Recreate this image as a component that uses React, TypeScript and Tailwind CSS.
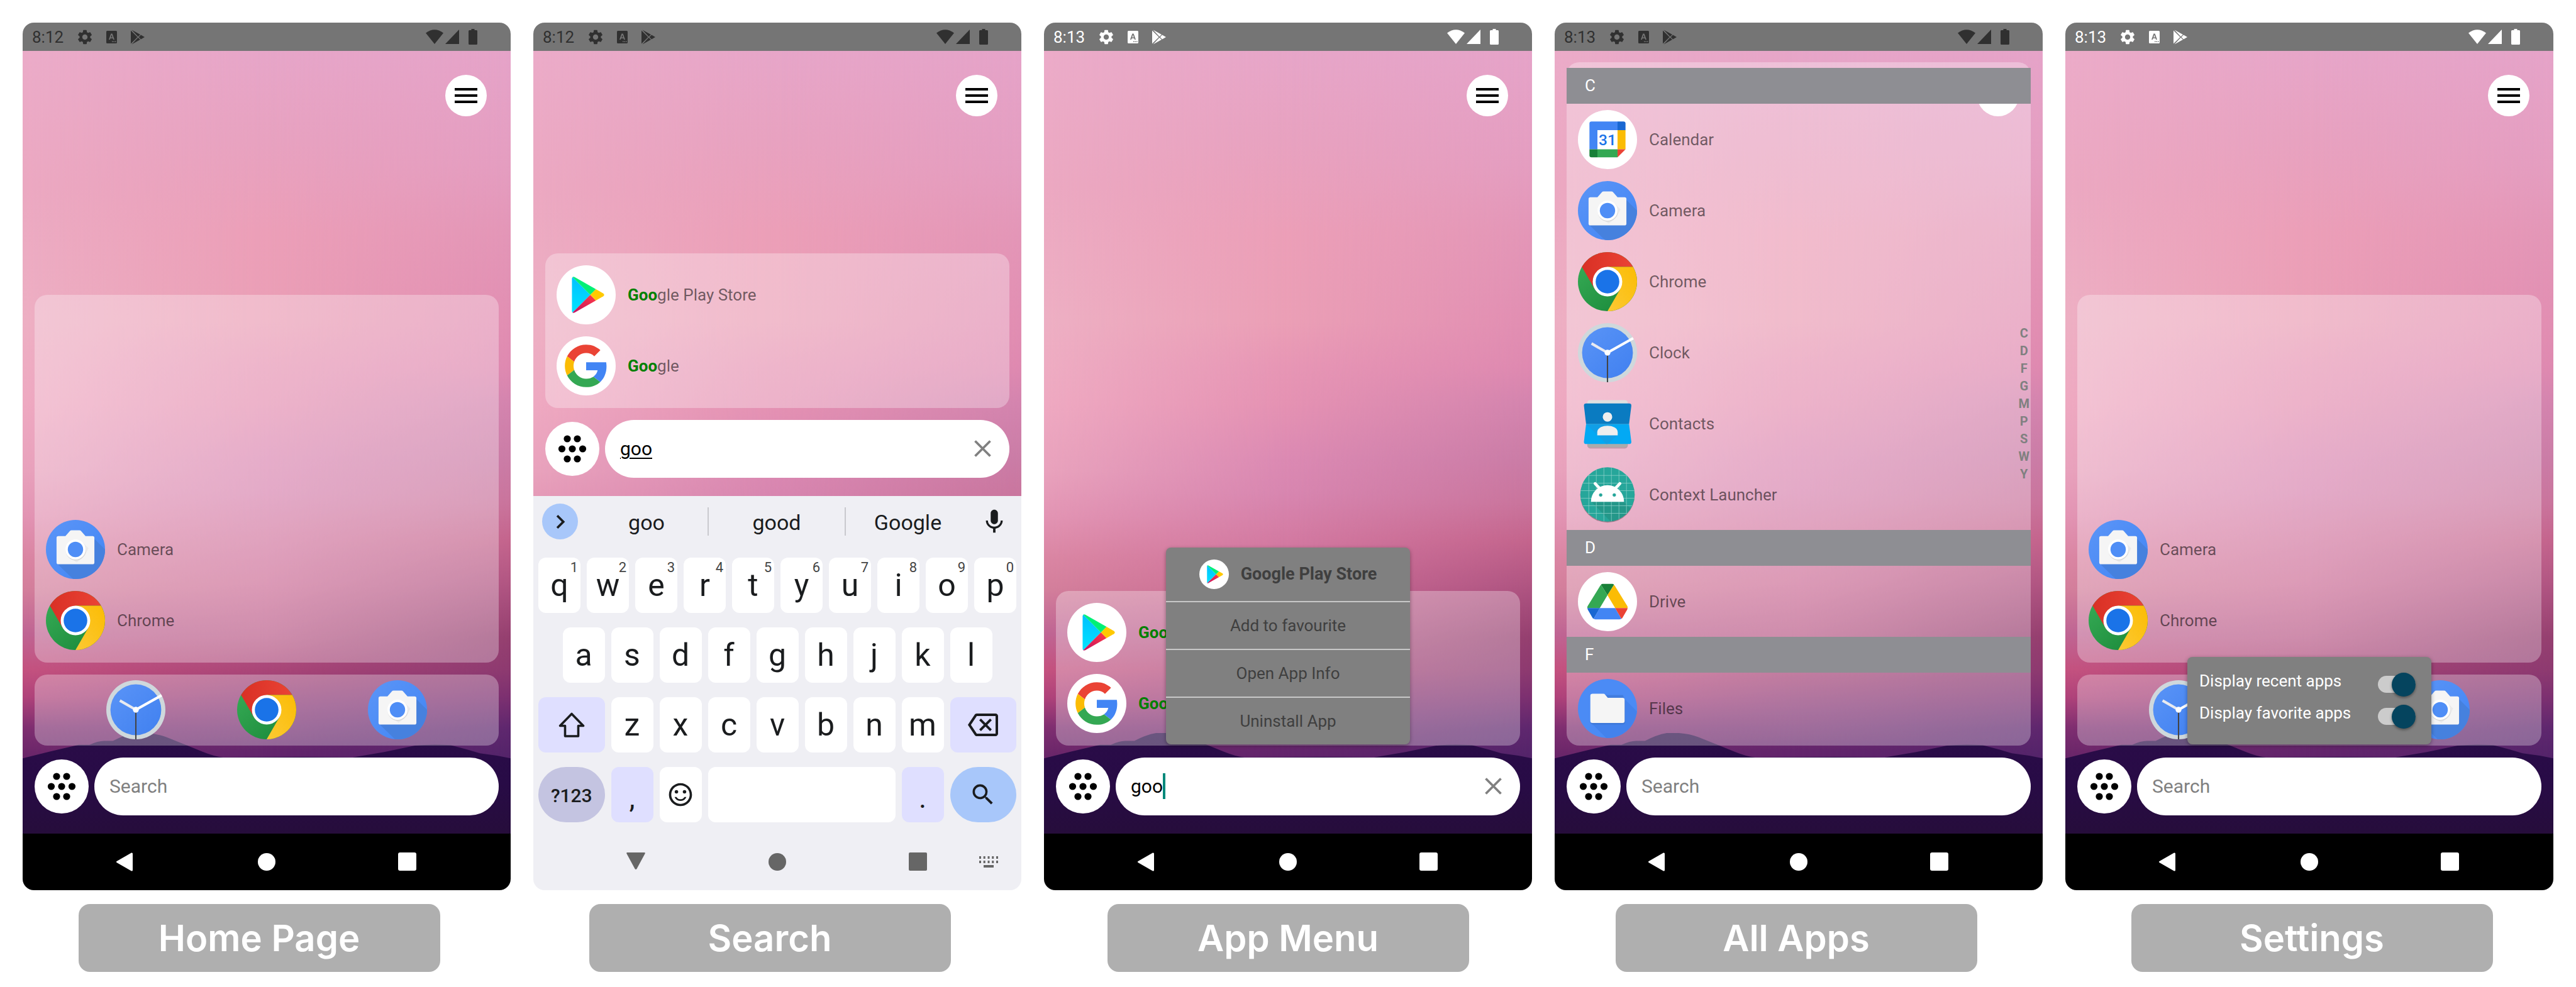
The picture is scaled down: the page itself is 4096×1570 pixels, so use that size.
import React, { useId } from "react";
import { MdSettings, MdChevronRight, MdMic, MdOutlineBackspace, MdOutlineSentimentSatisfiedAlt, MdSearch } from "react-icons/md";

/* ---------- wallpaper ---------- */

type Stop = [number, string];

const LEFT_SKY: Stop[] = [
  [0, "#ebabc8"], [300, "#eba8c1"], [600, "#edafc3"], [780, "#eea9c1"], [930, "#e8a2bc"], [1030, "#e294b3"],
  [1120, "#da86a3"], [1190, "#d37f9b"], [1290, "#bf6593"], [1370, "#c4527f"], [1430, "#b0437a"], [1500, "#7e2e70"], [1560, "#6a2669"],
];
const MID_SKY: Stop[] = [
  [0, "#e7a6c9"], [200, "#e8a2c0"], [400, "#ec9fb8"], [600, "#eb9fb6"], [700, "#e796b5"], [780, "#e592b3"], [900, "#dc8ab3"],
  [980, "#d886b0"], [1050, "#d57ea6"], [1180, "#cd6f98"], [1300, "#b95b88"], [1370, "#aa4678"], [1450, "#8a3876"], [1550, "#63256c"],
];
const RIGHT_SKY: Stop[] = [
  [0, "#e5a3c8"], [250, "#e49dc0"], [400, "#e396b7"], [600, "#e18eb2"], [700, "#de89b0"], [780, "#d384ae"], [900, "#ca7ca6"],
  [1000, "#c9749c"], [1080, "#c4658d"], [1180, "#b05582"], [1300, "#943f6f"], [1370, "#8d3a70"], [1430, "#7c3070"], [1500, "#5e276e"], [1560, "#54246a"],
];

function SkyGradient({ id, stops }: { id: string; stops: Stop[] }) {
  return (
    <linearGradient id={id} gradientUnits="userSpaceOnUse" x1="0" y1="0" x2="0" y2="1731">
      {stops.map(([y, color]) => (
        <stop key={y} offset={y / 1731} stopColor={color} />
      ))}
    </linearGradient>
  );
}

function Wallpaper() {
  const id = useId();
  return (
    <svg className="absolute inset-x-0 top-0 w-full" viewBox="0 0 1080 1733" preserveAspectRatio="none" aria-hidden="true">
      <defs>
        <SkyGradient id={id + "l"} stops={LEFT_SKY} />
        <SkyGradient id={id + "m"} stops={MID_SKY} />
        <SkyGradient id={id + "r"} stops={RIGHT_SKY} />
        <linearGradient id={id + "fl"} x1="0" x2="1" y1="0" y2="0">
          <stop offset="0" stopColor="#fff" />
          <stop offset="0.5" stopColor="#000" />
        </linearGradient>
        <linearGradient id={id + "fr"} x1="0" x2="1" y1="0" y2="0">
          <stop offset="0.5" stopColor="#000" />
          <stop offset="1" stopColor="#fff" />
        </linearGradient>
        <linearGradient id={id + "hill"} x1="0" x2="0" y1="0" y2="1">
          <stop offset="0" stopColor="#2a0c48" />
          <stop offset="0.5" stopColor="#280b46" />
          <stop offset="1" stopColor="#260d3b" />
        </linearGradient>
        <mask id={id + "ml"} style={{ maskType: "luminance" }}>
          <rect width="1080" height="1733" fill={`url(#${id}fl)`} />
        </mask>
        <mask id={id + "mr"} style={{ maskType: "luminance" }}>
          <rect width="1080" height="1733" fill={`url(#${id}fr)`} />
        </mask>
      </defs>
      <rect width="1080" height="1733" fill={`url(#${id}m)`} />
      <rect width="1080" height="1733" fill={`url(#${id}l)`} mask={`url(#${id}ml)`} />
      <rect width="1080" height="1733" fill={`url(#${id}r)`} mask={`url(#${id}mr)`} />
      <path
        fill={`url(#${id}hill)`}
        d="M0 1566 60 1551 124 1536H148Q168 1527 182 1527.5H200Q225 1514 248 1510H275Q300 1512 318 1519L358 1535 400 1552Q425 1562 444 1564L620 1563 730 1564 800 1552 868 1538Q905 1534 947 1537L985 1547 1012 1555 1050 1560 1080 1566V1733H0Z"
      />
    </svg>
  );
}

/* ---------- app icons, each on a 100 unit canvas ---------- */

type AppName = "Calendar" | "Camera" | "Chrome" | "Clock" | "Contacts" | "Context Launcher" | "Drive" | "Files" | "Google Play Store" | "Google";

function CameraArt() {
  const id = useId();
  return (
    <>
      <defs>
        <clipPath id={id + "c"}>
          <circle cx="50" cy="50" r="50" />
        </clipPath>
        <linearGradient id={id + "s"} x1="0" y1="0" x2="1" y2="1">
          <stop offset="0" stopColor="#5b95f7" />
          <stop offset="1" stopColor="#4285f4" />
        </linearGradient>
      </defs>
      <circle cx="50" cy="50" r="50" fill={`url(#${id}s)`} />
      <path clipPath={`url(#${id}c)`} fill="#4681de" d="M81 31 104 54V104H50L19 74Z" />
      <path fill="#f5f5f5" d="M21 27.500H33L40.500 19Q41.500 17.500 43.500 17.500H56.500Q58.500 17.500 59.500 19L67 27.500H79Q82 27.500 82 30.500V72Q82 75 79 75H21Q18 75 18 72V30.500Q18 27.500 21 27.500Z" />
      <path fill="#e4e4e4" d="M62 38 72 48 66 60 52 72 40 63Z" opacity=".6" />
      <circle cx="50.500" cy="51.500" r="17" fill="#d9d9d9" />
      <circle cx="50" cy="50" r="17" fill="#fff" />
      <circle cx="50" cy="50" r="13" fill="#4f8ef6" />
    </>
  );
}

function ChromeArt() {
  const id = useId();
  return (
    <>
      <defs>
        <linearGradient id={id + "r"} x1="0" x2="1">
          <stop offset="0" stopColor="#d93025" />
          <stop offset="1" stopColor="#ea4335" />
        </linearGradient>
        <linearGradient id={id + "y"} x1="0" x2="1" y1="1" y2="0">
          <stop offset="0" stopColor="#fcc934" />
          <stop offset="1" stopColor="#fbbc04" />
        </linearGradient>
        <linearGradient id={id + "g"} x1="0.600" y1="1" x2="0" y2="0.300">
          <stop offset="0" stopColor="#1e8e3e" />
          <stop offset="1" stopColor="#34a853" />
        </linearGradient>
      </defs>
      <circle cx="50" cy="50" r="50" fill={`url(#${id}g)`} />
      <path fill={`url(#${id}r)`} d="M6.700 25A50 50 0 0 1 93.300 25H50L28.350 62.500Z" />
      <path fill={`url(#${id}y)`} d="M93.300 25A50 50 0 0 1 50 100L71.650 62.500 50 25Z" />
      <circle cx="50" cy="50" r="25" fill="#fff" />
      <circle cx="50" cy="50" r="20" fill="#1a73e8" />
    </>
  );
}

function ClockArt() {
  const id = useId();
  return (
    <>
      <defs>
        <linearGradient id={id} x1="0" y1="0" x2="1" y2="1">
          <stop offset="0" stopColor="#5a94f7" />
          <stop offset="1" stopColor="#4080f0" />
        </linearGradient>
      </defs>
      <circle cx="50" cy="50" r="50" fill="#cfd8dc" />
      <circle cx="50" cy="50" r="43" fill={`url(#${id})`} />
      <path stroke="#444" strokeWidth="2.200" d="M50 50V100" />
      <path stroke="#e8eaf0" strokeWidth="4.500" d="M50 50 23 34.500" />
      <path stroke="#fff" strokeWidth="4.500" d="M50 50 93.500 25.500" />
      <circle cx="50" cy="50" r="5" fill="#fff" />
    </>
  );
}

function ContactsArt() {
  return (
    <>
      <rect x="15.800" y="12" width="68.600" height="80" rx="5" fill="#000" opacity=".18" />
      <rect x="15.800" y="10" width="68.600" height="40" rx="5" fill="#e0e0e0" />
      <rect x="15.800" y="50" width="68.600" height="40" rx="5" fill="#ababab" />
      <path fill="#0a7bc1" d="M14 15.800H86.500Q90.700 15.800 90.300 20L86.500 50.500H13.800L10.200 20Q9.800 15.800 14 15.800Z" />
      <path fill="#03a9f4" d="M13.800 50.500H86.500L90.300 80Q90.700 84.400 86.500 84.400H14Q9.800 84.400 10.200 80Z" />
      <path fill="#119fe6" d="M14.500 51 33 69.500H67L50 84.400H48Z M14.500 51H60L33 69Z" />
      <circle cx="50" cy="38.500" r="8" fill="#eee" />
      <path fill="#eee" d="M32.700 69.600V64C33.500 50 66.500 50 67.300 64V69.600Z" />
    </>
  );
}

function LauncherArt() {
  const id = useId();
  return (
    <>
      <defs>
        <clipPath id={id}>
          <circle cx="50" cy="49.500" r="46" />
        </clipPath>
      </defs>
      <circle cx="50" cy="51" r="46" fill="#000" opacity=".3" />
      <circle cx="50" cy="49.500" r="46" fill="#26a69a" />
      <g clipPath={`url(#${id})`}>
        <path fill="#249384" d="M23 62H78L100 84V100H60Z" opacity=".8" />
        <path
          stroke="#8fd2cb"
          strokeWidth=".8"
          d="M18.400 0V100M31.100 0V100M43.900 0V100M56.600 0V100M69.400 0V100M82.100 0V100M0 17.300H100M0 30.400H100M0 43.100H100M0 55.900H100M0 68.600H100M0 81.400H100"
        />
      </g>
      <path fill="#fff" d="M22 62A28 28.300 0 0 1 78 62Z" />
      <path stroke="#fff" strokeWidth="4.800" strokeLinecap="round" d="M29 31 37.500 40M71 31 62.500 40" />
      <circle cx="38.500" cy="50.300" r="2.800" fill="#26a69a" />
      <circle cx="61.500" cy="50.300" r="2.800" fill="#26a69a" />
    </>
  );
}

function CalendarArt() {
  return (
    <>
      <circle cx="50" cy="50" r="50" fill="#fff" />
      <path fill="#4285f4" d="M23 19.500H67V34H33V66.500H19.500V23Q19.500 19.500 23 19.500Z" />
      <path fill="#1967d2" d="M67 19.500H77Q80.500 19.500 80.500 23V34H67Z" />
      <path fill="#fbbc04" d="M67 34H80.500V66.500H67Z" />
      <path fill="#34a853" d="M33 66.500H67V80H33Z" />
      <path fill="#188038" d="M19.500 66.500H33V80H23Q19.500 80 19.500 76.500Z" />
      <path fill="#ea4335" d="M67 66.500H80.500L67 80Z" />
      <text x="50" y="60" textAnchor="middle" fontFamily="Roboto" fontWeight="500" fontSize="26" fill="#1a73e8">
        31
      </text>
    </>
  );
}

function DriveArt() {
  return (
    <>
      <circle cx="50" cy="50" r="50" fill="#fff" />
      <path fill="#188038" d="M42 20H58Q60 20 61 21.500L50 39 39 21.500Q40 20 42 20Z" />
      <path fill="#34a853" d="M39 21.500 50 39 37 61H16Q15.500 59 16.500 57.500L37.500 23.500Z" />
      <path fill="#fbbc04" d="M61 21.500 62.500 23.500 83.500 57.500Q84.500 59 84 61H63L50 39Z" />
      <path fill="#4285f4" d="M37 61H63L73.500 79Q72 80 70 80H30Q28 80 26.500 79Z" />
      <path fill="#1967d2" d="M16 61H37L26.500 79Q25 78 24.500 77L17 64Q16 62.500 16 61Z" />
      <path fill="#ea4335" d="M63 61H84Q84 62.500 83 64L75.500 77Q75 78 73.500 79Z" />
    </>
  );
}

function FilesArt() {
  const id = useId();
  return (
    <>
      <defs>
        <clipPath id={id}>
          <circle cx="50" cy="50" r="50" />
        </clipPath>
      </defs>
      <circle cx="50" cy="50" r="50" fill="#4b8bf5" />
      <path clipPath={`url(#${id})`} fill="#4382ec" d="M78 33 104 59V104H52L22 74Z" />
      <path fill="#3a70c8" opacity=".5" d="M24 27H76Q79 34 80 37V73Q80 77 76 77H25Q21 77 21 73Z" />
      <path fill="#f5f5f5" d="M25 25H43Q45 25 46 26.500L50.500 32H75.500Q79 32 79 35.500V71Q79 74.500 75.500 74.500H24.500Q21 74.500 21 71V28.500Q21 25 25 25Z" />
    </>
  );
}

function PlayArt() {
  const id = useId();
  return (
    <>
      <defs>
        <linearGradient id={id + "b"} x1="0" y1="0" x2="0" y2="1">
          <stop offset="0" stopColor="#00c0ff" />
          <stop offset="1" stopColor="#00e3ff" />
        </linearGradient>
        <linearGradient id={id + "r"} x1="1" y1="0" x2="0" y2="1">
          <stop offset="0" stopColor="#ff3a44" />
          <stop offset="1" stopColor="#c31162" />
        </linearGradient>
      </defs>
      <circle cx="50" cy="50" r="50" fill="#fff" />
      <path fill={`url(#${id}b)`} d="M27 20 57 50 27 80Q26 79 26 77V23Q26 21 27 20Z" />
      <path fill="#00f076" d="M27 20Q28 19 30.500 20L66.500 40.500 57 50Z" />
      <path fill={`url(#${id}r)`} d="M27 80Q28 81 30.500 80L66.500 59.500 57 50Z" />
      <path fill="#ffc900" d="M66.500 40.500 79 47.500Q82 50 79 52.500L66.500 59.500 57 50Z" />
    </>
  );
}

function GoogleArt() {
  return (
    <>
      <circle cx="50" cy="50" r="50" fill="#fff" />
      <g transform="translate(14 14) scale(1.5)">
        <path fill="#ea4335" d="M24 9.500c3.540 0 6.710 1.220 9.210 3.600l6.850-6.850C35.900 2.380 30.470 0 24 0 14.620 0 6.510 5.380 2.560 13.220l7.980 6.190C12.430 13.720 17.740 9.500 24 9.500z" />
        <path fill="#4285f4" d="M46.980 24.550c0-1.570-.15-3.090-.38-4.550H24v9.020h12.940c-.58 2.960-2.260 5.480-4.780 7.180l7.730 6c4.510-4.180 7.090-10.360 7.090-17.650z" />
        <path fill="#fbbc05" d="M10.530 28.590c-.48-1.450-.76-2.990-.76-4.590s.27-3.140.76-4.590l-7.980-6.190C.92 16.460 0 20.120 0 24c0 3.880.92 7.540 2.560 10.780l7.970-6.190z" />
        <path fill="#34a853" d="M24 48c6.480 0 11.930-2.130 15.890-5.810l-7.730-6c-2.150 1.450-4.920 2.300-8.160 2.300-6.260 0-11.570-4.220-13.470-9.910l-7.980 6.190C6.510 42.620 14.620 48 24 48z" />
      </g>
    </>
  );
}

const ART: Record<AppName, () => React.JSX.Element> = {
  Calendar: CalendarArt,
  Camera: CameraArt,
  Chrome: ChromeArt,
  Clock: ClockArt,
  Contacts: ContactsArt,
  "Context Launcher": LauncherArt,
  Drive: DriveArt,
  Files: FilesArt,
  "Google Play Store": PlayArt,
  Google: GoogleArt,
};

function AppIcon({ name, className = "size-[94px]" }: { name: AppName; className?: string }) {
  const Art = ART[name];
  return (
    <svg className={`${className} shrink-0`} viewBox="0 0 100 100" fill="none" aria-hidden="true">
      <Art />
    </svg>
  );
}

/* ---------- phone parts ---------- */

function StatusBar({ time, light = false }: { time: string; light?: boolean }) {
  return (
    <div className={`flex h-[45px] shrink-0 items-center bg-[#757575] pr-[53px] pl-[15px] ${light ? "text-white" : "text-[#303030]"}`}>
      <span className="text-[26px] leading-8">{time}</span>
      <MdSettings className="ml-5 size-7" />
      <svg className="ml-5 h-5 w-[17px]" viewBox="0 0 17 20" aria-hidden="true">
        <path
          fill="currentColor"
          fillRule="evenodd"
          d="M1.500 0H15.500Q17 0 17 1.500V18.500Q17 20 15.500 20H1.500Q0 20 0 18.500V1.500Q0 0 1.500 0ZM7.400 4.500 4 14H5.900L6.600 12H10.400L11.100 14H13L9.600 4.500ZM8.500 6.600 9.800 10.400H7.200ZM9 16.500V18H10.500V16.500ZM11.500 16.500V18H13V16.500ZM14 16.500V18H15.500V16.500Z"
        />
      </svg>
      <svg className="ml-[22px] h-6 w-[22px]" viewBox="0 0 22 24" fill="currentColor" aria-hidden="true">
        <path d="M0 1.500 10.600 12 0 22.500ZM1.500 0.500 15 8 11.600 11.200ZM1.500 23.500 15 16 11.600 12.800ZM16 8.500 22 12 16 15.500 12.600 12Z" />
      </svg>
      <svg className="ml-auto h-[23px] w-7" viewBox="0 0 28 23" fill="currentColor" aria-hidden="true">
        <path d="M0 5.500Q14-5 28 5.500L14 23Z" />
      </svg>
      <svg className="ml-[3px] h-[23px] w-[22px]" viewBox="0 0 22 23" fill="currentColor" aria-hidden="true">
        <path d="M22 0V23H0Z" />
      </svg>
      <svg className="ml-[15px] h-[25px] w-[14px]" viewBox="0 0 14 25" fill="currentColor" aria-hidden="true">
        <path d="M4.500 0H9.500V2H12.500Q14 2 14 3.500V23.500Q14 25 12.500 25H1.500Q0 25 0 23.500V3.500Q0 2 1.500 2H4.500Z" />
      </svg>
    </div>
  );
}

function NavBar() {
  return (
    <nav className="flex h-[90px] shrink-0 items-center justify-between bg-black pr-[150px] pl-[148px]">
      <button type="button" aria-label="Back">
        <svg className="size-[30px]" viewBox="0 0 30 30" aria-hidden="true">
          <path fill="#fff" d="M1.500 14 25 0.500Q27 0 27 2V28Q27 30 25 29.500L1.500 16Q0 15 1.500 14Z" />
        </svg>
      </button>
      <button type="button" aria-label="Home" className="size-[28px] rounded-full bg-white" />
      <button type="button" aria-label="Overview" className="size-[29px] rounded-[3px] bg-white" />
    </nav>
  );
}

function MenuButton() {
  return (
    <button type="button" aria-label="Menu" className="absolute top-[38px] right-[38px] flex size-[66px] items-center justify-center rounded-full bg-white">
      <svg className="h-6 w-9" viewBox="0 0 36 24" aria-hidden="true">
        <path fill="#000" d="M0 0H36V4H0ZM0 10H36V14H0ZM0 20H36V24H0Z" />
      </svg>
    </button>
  );
}

function CloseIcon() {
  return (
    <svg className="size-[27px]" viewBox="0 0 27 27" aria-hidden="true">
      <path stroke="#808080" strokeWidth="3.800" d="M1.500 1.500 25.500 25.500M25.500 1.500 1.500 25.500" />
    </svg>
  );
}

function SearchRow({ query, mode = "empty" }: { query?: string; mode?: "empty" | "composing" | "caret" }) {
  return (
    <div className="flex items-center gap-[9px]">
      <button type="button" aria-label="All apps" className="flex size-[86px] shrink-0 items-center justify-center rounded-full bg-white">
        <svg className="size-[60px]" viewBox="0 0 60 60" aria-hidden="true">
          {[[22, 14], [38, 14], [13.5, 30], [30, 30], [46.5, 30], [22, 46], [38, 46]].map(([x, y]) => (
            <circle key={`${x}-${y}`} cx={x} cy={y} r="5.600" />
          ))}
        </svg>
      </button>
      <div className="flex h-[92px] min-w-0 flex-1 items-center rounded-full bg-white pr-[29px] pl-6">
        {mode === "empty" ? (
          <input aria-label="Search apps" placeholder="Search" className="w-full min-w-0 text-[30px] leading-10 outline-none placeholder:text-[#808080]" />
        ) : (
          <>
            <input
              aria-label="Search apps"
              defaultValue={query}
              className={`field-sizing-content text-[30px] leading-10 text-black outline-none ${mode === "composing" ? "underline decoration-2 underline-offset-4" : ""}`}
            />
            {mode === "caret" && <span className="h-[41px] w-1 bg-[#00897b]" />}
            <button type="button" aria-label="Clear search" className="ml-auto">
              <CloseIcon />
            </button>
          </>
        )}
      </div>
    </div>
  );
}

function AppRow({ name, match }: { name: AppName; match?: string }) {
  const size = match ? match.length : 0;
  return (
    <button type="button" className="flex h-[113px] w-full shrink-0 items-center gap-[19px] px-[18px] text-left">
      <AppIcon name={name} />
      <span className="text-[26px] leading-8 text-black/55">
        {size > 0 && <b className="font-bold text-[#008000]">{name.slice(0, size)}</b>}
        {name.slice(size)}
      </span>
    </button>
  );
}

function HomeArea({ children, overlay }: { children: React.ReactNode; overlay?: React.ReactNode }) {
  return (
    <div className="relative flex min-h-0 flex-1 flex-col overflow-hidden">
      <Wallpaper />
      <MenuButton />
      <div className="relative flex min-h-0 flex-1 flex-col justify-end gap-[19px] px-[19px] pb-[29px]">{children}</div>
      {overlay}
    </div>
  );
}

const PANEL = "rounded-[20px] bg-white/30";

function RecentApps() {
  return (
    <section aria-label="Recent apps" className={`flex h-[585px] flex-col justify-end pb-[10px] ${PANEL}`}>
      <AppRow name="Camera" />
      <AppRow name="Chrome" />
    </section>
  );
}

function FavoriteApps() {
  const apps: AppName[] = ["Clock", "Chrome", "Camera"];
  return (
    <section aria-label="Favorite apps" className={`flex h-[113px] items-center justify-evenly ${PANEL}`}>
      {apps.map((name) => (
        <button key={name} type="button" aria-label={name}>
          <AppIcon name={name} />
        </button>
      ))}
    </section>
  );
}

function SearchResults() {
  return (
    <section aria-label="Search results" className={`flex flex-col py-[10px] ${PANEL}`}>
      <AppRow name="Google Play Store" match="Goo" />
      <AppRow name="Google" match="Goo" />
    </section>
  );
}

/* ---------- keyboard ---------- */

const KEY = "col-span-2 h-[88px] rounded-xl bg-white text-center text-[50px] leading-[88px]";

function LetterKey({ letter, hint, className = "" }: { letter: string; hint?: string; className?: string }) {
  return (
    <button type="button" className={`relative ${KEY} ${className}`}>
      {letter}
      {hint && <span className="absolute top-1 right-1 text-[22px] leading-6 text-[#444]">{hint}</span>}
    </button>
  );
}

function Keyboard() {
  return (
    <div className="flex shrink-0 flex-col bg-[#efeff4] text-[#1a1c1e]">
      <div className="flex h-[82px] items-center pr-5 pl-[14px] text-[34px]">
        <button type="button" aria-label="More tools" className="flex size-[57px] items-center justify-center rounded-full bg-[#a8c7fa]">
          <MdChevronRight className="size-11" />
        </button>
        <div className="ml-1 flex flex-1 items-center">
          <button type="button" className="w-[202px] pt-1 pl-2 text-center">goo</button>
          <span className="h-[45px] w-[2px] bg-[#c9c9ce]" />
          <button type="button" className="flex-1 pt-1 text-center">good</button>
          <span className="h-[45px] w-[2px] bg-[#c9c9ce]" />
          <button type="button" className="w-[197px] pt-1 text-center">Google</button>
        </div>
        <button type="button" aria-label="Voice input" className="ml-4">
          <MdMic className="size-[46px]" />
        </button>
      </div>
      <div className="mt-4 grid grid-cols-20 gap-x-[10px] gap-y-[23px] px-2 pb-[18px]">
        {"qwertyuiop".split("").map((letter, i) => (
          <LetterKey key={letter} letter={letter} hint={String((i + 1) % 10)} />
        ))}
        {"asdfghjkl".split("").map((letter, i) => (
          <LetterKey key={letter} letter={letter} className={i === 0 ? "col-start-2" : ""} />
        ))}
        <button type="button" aria-label="Shift" className="col-span-3 col-start-1 flex h-[88px] items-center justify-center rounded-xl bg-[#dfdfff]">
          <svg className="h-10 w-[42px]" viewBox="0 0 42 40" fill="none" stroke="currentColor" strokeWidth="3.600" strokeLinejoin="round" aria-hidden="true">
            <path d="M21 2.500 39.500 21.500H31.500V38H10.500V21.500H2.500Z" />
          </svg>
        </button>
        {"zxcvbnm".split("").map((letter) => (
          <LetterKey key={letter} letter={letter} />
        ))}
        <button type="button" aria-label="Backspace" className="col-span-3 flex h-[88px] items-center justify-center rounded-xl bg-[#dfdfff]">
          <MdOutlineBackspace className="size-12" />
        </button>
        <button type="button" className="col-span-3 h-[88px] rounded-full bg-[#c4c4e1] pt-1 text-[30px] font-medium">
          ?123
        </button>
        <button type="button" className="col-span-2 h-[88px] rounded-xl bg-[#dfdfff] pt-3 text-[46px]">,</button>
        <button type="button" aria-label="Emoji" className="col-span-2 flex h-[88px] items-center justify-center rounded-xl bg-white">
          <MdOutlineSentimentSatisfiedAlt className="size-11" />
        </button>
        <button type="button" aria-label="Space" className="col-span-8 h-[88px] rounded-xl bg-white" />
        <button type="button" className="col-span-2 h-[88px] rounded-xl bg-[#dfdfff] pt-3 text-[46px]">.</button>
        <button type="button" aria-label="Search" className="col-span-3 flex h-[88px] items-center justify-center rounded-full bg-[#a8c7fa]">
          <MdSearch className="size-11" />
        </button>
      </div>
      <nav className="relative flex h-[90px] items-center justify-between pr-[150px] pl-[148px] text-[#666]">
        <button type="button" aria-label="Hide keyboard">
          <svg className="h-[30px] w-[30px]" viewBox="0 0 30 30" fill="currentColor" aria-hidden="true">
            <path d="M1.500 0H28.500Q30.500 0 29.500 2L16.500 26Q15 28 13.500 26L0.500 2Q-0.500 0 1.500 0Z" />
          </svg>
        </button>
        <button type="button" aria-label="Home" className="size-[28px] rounded-full bg-current" />
        <button type="button" aria-label="Overview" className="size-[29px] rounded-[2px] bg-current" />
        <button type="button" aria-label="Switch keyboard" className="absolute right-[37px]">
          <svg className="h-[18px] w-[30px]" viewBox="0 0 30 18" fill="currentColor" aria-hidden="true">
            <path d="M0 0H3V4H0ZM6.700 0H9.700V4H6.700ZM13.500 0H16.500V4H13.500ZM20.200 0H23.200V4H20.200ZM27 0H30V4H27ZM0 7H3V11H0ZM6.700 7H9.700V11H6.700ZM13.500 7H16.500V11H13.500ZM20.200 7H23.200V11H20.200ZM27 7H30V11H27ZM7 14H23V18H7Z" />
          </svg>
        </button>
      </nav>
    </div>
  );
}

/* ---------- popups ---------- */

const POPUP = "absolute bottom-[142px] left-1/4 w-1/2 rounded-lg bg-[#808080] shadow-[0_2px_6px_rgba(0,0,0,0.35)]";

function AppMenu() {
  const actions = ["Add to favourite", "Open App Info", "Uninstall App"];
  return (
    <div role="menu" aria-label="Google Play Store" className={`${POPUP} text-[26px] leading-8 text-[#3f3f3f]`}>
      <div className="flex h-[85px] items-center justify-center gap-[19px] text-[27px] font-bold">
        <AppIcon name="Google Play Store" className="size-[47px]" />
        <span>Google Play Store</span>
      </div>
      {actions.map((action) => (
        <button key={action} type="button" role="menuitem" className="flex h-[76px] w-full items-center justify-center border-t-2 border-[#c8c8c8]">
          {action}
        </button>
      ))}
    </div>
  );
}

function SettingsMenu() {
  const options = ["Display recent apps", "Display favorite apps"];
  return (
    <div className={`${POPUP} flex h-[139px] flex-col pt-[18px] pr-[25px] pl-[19px]`}>
      {options.map((option) => (
        <label key={option} className="flex h-[51px] items-start justify-between text-[26px] leading-10 text-white">
          {option}
          <input
            type="checkbox"
            role="switch"
            defaultChecked
            className="relative h-[27px] w-[60px] appearance-none self-center rounded-full bg-[#cccccc] before:absolute before:-top-[5px] before:left-0 before:size-[38px] before:rounded-full before:bg-[#05445e] before:shadow-[0_2px_4px_rgba(0,0,0,0.4)] checked:before:left-[22px]"
          />
        </label>
      ))}
    </div>
  );
}

/* ---------- all apps ---------- */

const SECTIONS: { letter: string; apps: AppName[] }[] = [
  { letter: "C", apps: ["Calendar", "Camera", "Chrome", "Clock", "Contacts", "Context Launcher"] },
  { letter: "D", apps: ["Drive"] },
  { letter: "F", apps: ["Files"] },
];

function AllApps() {
  return (
    <section aria-label="All apps" className={`relative mt-[18px] min-h-0 flex-1 pt-[9px] ${PANEL}`}>
      {SECTIONS.map(({ letter, apps }) => (
        <div key={letter}>
          <h2 className="flex h-[57px] items-center bg-[#8e8e93] pl-[29px] text-[26px] text-white">{letter}</h2>
          {apps.map((name) => (
            <AppRow key={name} name={name} />
          ))}
        </div>
      ))}
      <nav aria-label="Jump to letter" className="absolute top-1/2 right-[2px] flex -translate-y-1/2 flex-col text-center text-[20px] leading-7 font-bold text-[#808080]">
        {"CDFGMPSWY".split("").map((letter) => (
          <button key={letter} type="button">
            {letter}
          </button>
        ))}
      </nav>
    </section>
  );
}

/* ---------- page ---------- */

function Screen({ caption, shift = "", children }: { caption: string; shift?: string; children: React.ReactNode }) {
  return (
    <figure className="flex min-w-0 flex-col">
      <div className="flex aspect-[9/16] flex-col overflow-hidden rounded-[18px]">{children}</div>
      <figcaption className={`mt-[22px] flex justify-center ${shift}`}>
        <span className="flex h-[108px] w-[575px] items-center justify-center rounded-[18px] bg-[#afafaf] font-['Inter'] text-[58px] leading-[64px] font-semibold text-white">
          {caption}
        </span>
      </figcaption>
    </figure>
  );
}

export default function App() {
  return (
    <main className="grid grid-cols-5 gap-9 bg-white p-9 pb-6 font-['Roboto',sans-serif]">
      <Screen caption="Home Page" shift="pr-6">
        <StatusBar time="8:12" />
        <HomeArea>
          <RecentApps />
          <FavoriteApps />
          <SearchRow />
        </HomeArea>
        <NavBar />
      </Screen>

      <Screen caption="Search" shift="pr-6">
        <StatusBar time="8:12" />
        <HomeArea>
          <SearchResults />
          <SearchRow query="goo" mode="composing" />
        </HomeArea>
        <Keyboard />
      </Screen>

      <Screen caption="App Menu">
        <StatusBar time="8:13" light />
        <HomeArea overlay={<AppMenu />}>
          <SearchResults />
          <SearchRow query="goo" mode="caret" />
        </HomeArea>
        <NavBar />
      </Screen>

      <Screen caption="All Apps" shift="pr-2">
        <StatusBar time="8:13" />
        <HomeArea>
          <AllApps />
          <SearchRow />
        </HomeArea>
        <NavBar />
      </Screen>

      <Screen caption="Settings" shift="pl-2">
        <StatusBar time="8:13" light />
        <HomeArea overlay={<SettingsMenu />}>
          <RecentApps />
          <FavoriteApps />
          <SearchRow />
        </HomeArea>
        <NavBar />
      </Screen>
    </main>
  );
}
